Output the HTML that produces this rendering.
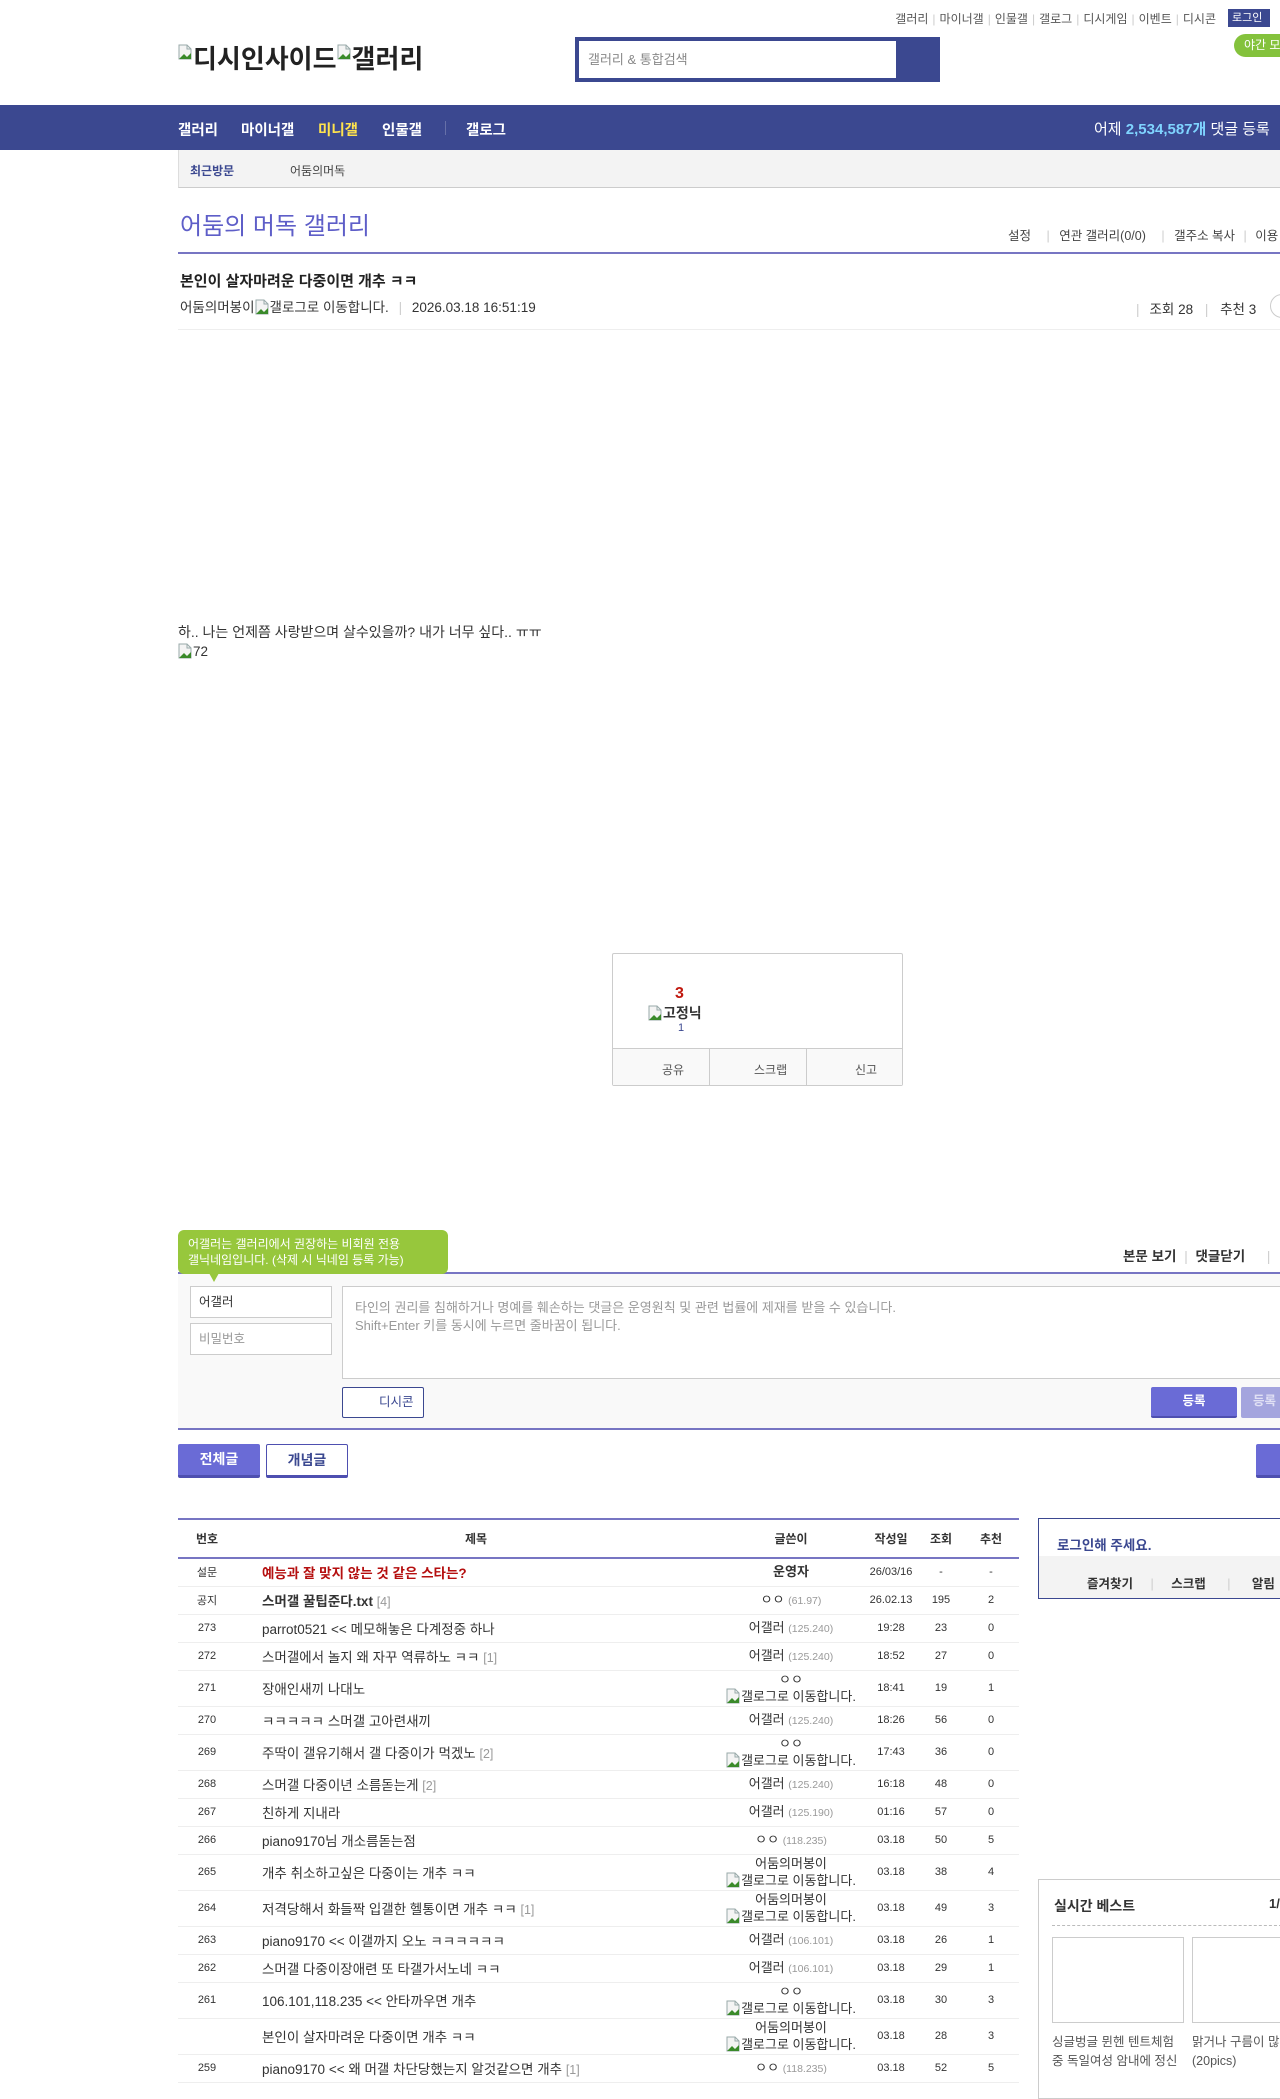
<!DOCTYPE html>
<html><head><meta charset="utf-8">
<style>
*{margin:0;padding:0;box-sizing:border-box}
body{width:1280px;height:2085px;overflow:hidden;background:#fff;font-family:"Liberation Sans","Noto Sans CJK KR",sans-serif;color:#333;font-size:13px;position:relative}
.a{position:absolute;white-space:nowrap}
.bi{display:inline-block;width:14px;height:16px;vertical-align:-3px;margin-right:1px}
.tl{font-size:12px;color:#555}
.tl span{color:#ccc;margin:0 4px}
table{border-collapse:collapse;table-layout:fixed}
td{height:28px;font-size:11px;text-align:center;border-bottom:1px solid #eee;color:#333}
td.t{text-align:left;font-size:13.5px;padding-left:26px}
td.w{font-size:13px;line-height:16px}
.ip{color:#999;font-size:10.5px}
.rc{color:#999;font-size:12.5px}
tr.d td{height:36px}
</style></head><body>
<svg width="0" height="0" style="position:absolute"><defs><symbol id="bi" viewBox="0 0 14 16"><path d="M1 1h8l4 4v10H1z" fill="#f4f4f4" stroke="#9aa"/><path d="M1 15l5-5 3 3 4-4v6z" fill="#3a8a2a"/><path d="M9 1v4h4" fill="none" stroke="#9aa"/></symbol></defs></svg>

<div class="a tl" style="right:64px;top:10px">갤러리<span>|</span>마이너갤<span>|</span>인물갤<span>|</span>갤로그<span>|</span>디시게임<span>|</span>이벤트<span>|</span>디시콘</div>
<div class="a" style="left:1228px;top:9px;width:42px;height:18px;background:#3b4890;color:#fff;font-size:11px;line-height:18px;padding-left:4px">로그인</div>
<div class="a" style="left:1234px;top:34px;width:60px;height:23px;background:#84c23c;border-radius:12px;color:#fff;font-size:12px;line-height:23px;padding-left:10px">야간 모드</div>

<div class="a" style="left:178px;top:39px;font-size:26px;font-weight:bold;color:#222"><svg class="bi" style="vertical-align:8px"><use href="#bi"/></svg>디시인사이드<svg class="bi" style="vertical-align:8px"><use href="#bi"/></svg>갤러리</div>
<div class="a" style="left:575px;top:37px;width:365px;height:45px;background:#3b4890"></div>
<div class="a" style="left:579px;top:41px;width:317px;height:37px;background:#fff;font-size:13px;color:#888;line-height:37px;padding-left:9px">갤러리 &amp; 통합검색</div>

<div class="a" style="left:0;top:105px;width:1280px;height:45px;background:#3b4890"></div>
<div class="a" style="left:178px;top:119px;font-size:14.5px;font-weight:bold;color:#fff">갤러리</div>
<div class="a" style="left:241px;top:119px;font-size:14.5px;font-weight:bold;color:#fff">마이너갤</div>
<div class="a" style="left:318px;top:119px;font-size:14.5px;font-weight:bold;color:#ffe34d">미니갤</div>
<div class="a" style="left:382px;top:119px;font-size:14.5px;font-weight:bold;color:#fff">인물갤</div>
<div class="a" style="left:445px;top:121px;width:1px;height:14px;background:#6670a8"></div>
<div class="a" style="left:466px;top:119px;font-size:14.5px;font-weight:bold;color:#fff">갤로그</div>
<div class="a" style="left:1094px;top:118px;font-size:15px;color:#fff">어제 <b style="color:#7fd4ff">2,534,587개</b> 댓글 등록</div>

<div class="a" style="left:178px;top:150px;width:1110px;height:38px;background:#f3f3f3;border-left:1px solid #ddd;border-bottom:1px solid #ccc"></div>
<div class="a" style="left:190px;top:162px;font-size:12px;color:#3b4890;font-weight:bold">최근방문</div>
<div class="a" style="left:290px;top:162px;font-size:12px;color:#444">어둠의머독</div>

<div class="a" style="left:180px;top:206px;font-size:24px;color:#5e5ec8">어둠의 머독 갤러리</div>
<div class="a" style="left:1008px;top:225px;font-size:12.5px;color:#444">설정 <span style="color:#ccc;margin:0 6px 0 12px">|</span> 연관 갤러리(0/0) <span style="color:#ccc;margin:0 6px 0 12px">|</span> 갤주소 복사 <span style="color:#ccc;margin:0 5px">|</span> 이용</div>
<div class="a" style="left:178px;top:252px;width:1110px;height:2px;background:#7775c3"></div>

<div class="a" style="left:180px;top:270px;font-size:15px;font-weight:bold;color:#222">본인이 살자마려운 다중이면 개추 ㅋㅋ</div>
<div class="a" style="left:180px;top:296px;font-size:13.5px;color:#333">어둠의머봉이<svg class="bi"><use href="#bi"/></svg>갤로그로 이동합니다. <span style="color:#ccc;margin:0 6px">|</span> 2026.03.18 16:51:19</div>
<div class="a" style="left:1136px;top:298px;font-size:13.5px;color:#333"><span style="color:#ccc;margin-right:10px">|</span>조회 28 <span style="color:#ccc;margin:0 8px">|</span> 추천 3</div>
<div class="a" style="left:1270px;top:294px;width:24px;height:24px;border:1px solid #ccc;border-radius:12px"></div>
<div class="a" style="left:178px;top:329px;width:1110px;height:1px;background:#eee"></div>

<div class="a" style="left:178px;top:622px;font-size:14px;color:#333">하.. 나는 언제쯤 사랑받으며 살수있을까? 내가 너무 싶다.. ㅠㅠ</div>
<div class="a" style="left:178px;top:643px;font-size:13.5px;color:#333"><svg class="bi"><use href="#bi"/></svg>72</div>

<div class="a" style="left:612px;top:953px;width:291px;height:133px;border:1px solid #ccc;border-radius:2px"></div>
<div class="a" style="left:675px;top:985px;font-size:16px;font-weight:bold;color:#c0180e">3</div>
<div class="a" style="left:648px;top:1003px;font-size:14px;font-weight:bold;color:#333"><svg class="bi"><use href="#bi"/></svg>고정닉</div>
<div class="a" style="left:678px;top:1022px;font-size:11px;color:#3b4890">1</div>
<div class="a" style="left:613px;top:1048px;width:289px;height:37px;background:#f9f9f9;border-top:1px solid #ccc"></div>
<div class="a" style="left:709px;top:1048px;width:1px;height:37px;background:#ccc"></div>
<div class="a" style="left:806px;top:1048px;width:1px;height:37px;background:#ccc"></div>
<div class="a" style="left:662px;top:1061px;font-size:12px;color:#555">공유</div>
<div class="a" style="left:754px;top:1061px;font-size:12px;color:#555">스크랩</div>
<div class="a" style="left:855px;top:1061px;font-size:12px;color:#555">신고</div>

<div class="a" style="left:430px;top:1244px;font-size:14px;font-weight:bold;color:#333">순</div>
<div class="a" style="left:1123px;top:1245px;font-size:13.5px;font-weight:bold;color:#333">본문 보기 <span style="color:#ccc;font-weight:normal;margin:0 4px">|</span> 댓글닫기 <span style="color:#ccc;font-weight:normal;margin:0 0 0 18px">|</span></div>
<div class="a" style="left:178px;top:1272px;width:1110px;height:158px;background:#f9f9f9;border-top:2px solid #7775c3;border-bottom:2px solid #7775c3"></div>
<div class="a" style="left:178px;top:1230px;width:270px;height:44px;background:#97c73c;border-radius:6px;color:#fff;font-size:12px;line-height:16px;padding:6px 10px">어갤러는 갤러리에서 권장하는 비회원 전용<br>갤닉네임입니다. (삭제 시 닉네임 등록 가능)</div>
<div class="a" style="left:209px;top:1273px;width:0;height:0;border-left:5px solid transparent;border-right:5px solid transparent;border-top:9px solid #97c73c"></div>
<div class="a" style="left:190px;top:1286px;width:142px;height:32px;background:#fff;border:1px solid #ccc;font-size:12.5px;color:#333;line-height:30px;padding-left:8px">어갤러</div>
<div class="a" style="left:190px;top:1323px;width:142px;height:32px;background:#fff;border:1px solid #ccc;font-size:12.5px;color:#999;line-height:30px;padding-left:8px">비밀번호</div>
<div class="a" style="left:342px;top:1286px;width:950px;height:93px;background:#fff;border:1px solid #ccc;font-size:13px;color:#999;line-height:18px;padding:12px 12px">타인의 권리를 침해하거나 명예를 훼손하는 댓글은 운영원칙 및 관련 법률에 제재를 받을 수 있습니다.<br>Shift+Enter 키를 동시에 누르면 줄바꿈이 됩니다.</div>
<div class="a" style="left:342px;top:1387px;width:82px;height:31px;background:#fff;border:1px solid #3b4890;border-radius:2px;font-size:12.5px;color:#3b4890;line-height:29px;padding-left:36px">디시콘</div>
<div class="a" style="left:1151px;top:1387px;width:86px;height:31px;background:#6a6bd6;border-bottom:2px solid #4e4fb0;border-radius:2px;font-size:12.5px;font-weight:bold;color:#fff;line-height:29px;text-align:center">등록</div>
<div class="a" style="left:1241px;top:1387px;width:86px;height:31px;background:#a4a5de;border-radius:2px;font-size:12.5px;font-weight:bold;color:#e0e0f4;line-height:29px;padding-left:12px">등록</div>

<div class="a" style="left:178px;top:1444px;width:82px;height:34px;background:#6a6bd6;border-bottom:3px solid #4e4fb0;border-radius:2px;font-size:14px;font-weight:bold;color:#fff;line-height:31px;text-align:center">전체글</div>
<div class="a" style="left:266px;top:1444px;width:82px;height:34px;background:#fff;border:1px solid #4e4fb0;border-bottom:3px solid #4e4fb0;border-radius:2px;font-size:14px;font-weight:bold;color:#3b4890;line-height:30px;text-align:center">개념글</div>
<div class="a" style="left:1256px;top:1444px;width:60px;height:34px;background:#6a6bd6;border-bottom:3px solid #4e4fb0;border-radius:2px"></div>

<div class="a" style="left:178px;top:1518px;width:841px">
<table style="width:841px;border-top:2px solid #7775c3">
<colgroup><col style="width:58px"><col style="width:480px"><col style="width:150px"><col style="width:50px"><col style="width:50px"><col style="width:50px"><col style="width:3px"></colgroup>
<tr style="font-weight:bold"><td style="height:39px;font-size:12px;font-weight:bold;border-bottom:2px solid #7775c3">번호</td><td style="font-size:12px;font-weight:bold;border-bottom:2px solid #7775c3">제목</td><td style="font-size:12px;font-weight:bold;border-bottom:2px solid #7775c3">글쓴이</td><td style="font-size:12px;font-weight:bold;border-bottom:2px solid #7775c3">작성일</td><td style="font-size:12px;font-weight:bold;border-bottom:2px solid #7775c3">조회</td><td style="font-size:12px;font-weight:bold;border-bottom:2px solid #7775c3">추천</td><td style="border-bottom:2px solid #7775c3"></td></tr>
<tr><td>설문</td><td class="t" style="color:#b50f0f;font-weight:bold">예능과 잘 맞지 않는 것 같은 스타는?</td><td class="w" style="font-weight:bold">운영자</td><td>26/03/16</td><td>-</td><td>-</td><td></td></tr>
<tr><td>공지</td><td class="t" style="font-weight:bold">스머갤 꿀팁준다.txt <span class="rc" style="font-weight:normal">[4]</span></td><td class="w">ㅇㅇ <span class="ip">(61.97)</span></td><td>26.02.13</td><td>195</td><td>2</td><td></td></tr>
<tr><td>273</td><td class="t">parrot0521 &lt;&lt; 메모해놓은 다계정중 하나</td><td class="w">어갤러 <span class="ip">(125.240)</span></td><td>19:28</td><td>23</td><td>0</td><td></td></tr>
<tr><td>272</td><td class="t">스머갤에서 놀지 왜 자꾸 역류하노 ㅋㅋ <span class="rc">[1]</span></td><td class="w">어갤러 <span class="ip">(125.240)</span></td><td>18:52</td><td>27</td><td>0</td><td></td></tr>
<tr class="d"><td>271</td><td class="t">장애인새끼 나대노</td><td class="w">ㅇㅇ<br><svg class="bi"><use href="#bi"/></svg>갤로그로 이동합니다.</td><td>18:41</td><td>19</td><td>1</td><td></td></tr>
<tr><td>270</td><td class="t">ㅋㅋㅋㅋㅋ 스머갤 고아련새끼</td><td class="w">어갤러 <span class="ip">(125.240)</span></td><td>18:26</td><td>56</td><td>0</td><td></td></tr>
<tr class="d"><td>269</td><td class="t">주딱이 갤유기해서 갤 다중이가 먹겠노 <span class="rc">[2]</span></td><td class="w">ㅇㅇ<br><svg class="bi"><use href="#bi"/></svg>갤로그로 이동합니다.</td><td>17:43</td><td>36</td><td>0</td><td></td></tr>
<tr><td>268</td><td class="t">스머갤 다중이년 소름돋는게 <span class="rc">[2]</span></td><td class="w">어갤러 <span class="ip">(125.240)</span></td><td>16:18</td><td>48</td><td>0</td><td></td></tr>
<tr><td>267</td><td class="t">친하게 지내라</td><td class="w">어갤러 <span class="ip">(125.190)</span></td><td>01:16</td><td>57</td><td>0</td><td></td></tr>
<tr><td>266</td><td class="t">piano9170님 개소름돋는점</td><td class="w">ㅇㅇ <span class="ip">(118.235)</span></td><td>03.18</td><td>50</td><td>5</td><td></td></tr>
<tr class="d"><td>265</td><td class="t">개추 취소하고싶은 다중이는 개추 ㅋㅋ</td><td class="w">어둠의머봉이<br><svg class="bi"><use href="#bi"/></svg>갤로그로 이동합니다.</td><td>03.18</td><td>38</td><td>4</td><td></td></tr>
<tr class="d"><td>264</td><td class="t">저격당해서 화들짝 입갤한 헬통이면 개추 ㅋㅋ <span class="rc">[1]</span></td><td class="w">어둠의머봉이<br><svg class="bi"><use href="#bi"/></svg>갤로그로 이동합니다.</td><td>03.18</td><td>49</td><td>3</td><td></td></tr>
<tr><td>263</td><td class="t">piano9170 &lt;&lt; 이갤까지 오노 ㅋㅋㅋㅋㅋㅋ</td><td class="w">어갤러 <span class="ip">(106.101)</span></td><td>03.18</td><td>26</td><td>1</td><td></td></tr>
<tr><td>262</td><td class="t">스머갤 다중이장애련 또 타갤가서노네 ㅋㅋ</td><td class="w">어갤러 <span class="ip">(106.101)</span></td><td>03.18</td><td>29</td><td>1</td><td></td></tr>
<tr class="d"><td>261</td><td class="t">106.101,118.235 &lt;&lt; 안타까우면 개추</td><td class="w">ㅇㅇ<br><svg class="bi"><use href="#bi"/></svg>갤로그로 이동합니다.</td><td>03.18</td><td>30</td><td>3</td><td></td></tr>
<tr class="d"><td></td><td class="t">본인이 살자마려운 다중이면 개추 ㅋㅋ</td><td class="w">어둠의머봉이<br><svg class="bi"><use href="#bi"/></svg>갤로그로 이동합니다.</td><td>03.18</td><td>28</td><td>3</td><td></td></tr>
<tr><td>259</td><td class="t">piano9170 &lt;&lt; 왜 머갤 차단당했는지 알것같으면 개추 <span class="rc">[1]</span></td><td class="w">ㅇㅇ <span class="ip">(118.235)</span></td><td>03.18</td><td>52</td><td>5</td><td></td></tr>
</table></div>

<div class="a" style="left:1038px;top:1518px;width:260px;height:81px;border:1px solid #3b4890"></div>
<div class="a" style="left:1057px;top:1534px;font-size:13.5px;font-weight:bold;color:#3b4890">로그인해 주세요.</div>
<div class="a" style="left:1039px;top:1556px;width:250px;height:42px;background:#f3f3f3"></div>
<div class="a" style="left:1087px;top:1573px;font-size:12.5px;font-weight:bold;color:#333">즐겨찾기 <span style="color:#ccc;font-weight:normal;margin:0 14px">|</span> 스크랩 <span style="color:#ccc;font-weight:normal;margin:0 18px">|</span> 알림</div>

<div class="a" style="left:1038px;top:1879px;width:260px;height:220px;border:1px solid #ccc"></div>
<div class="a" style="left:1054px;top:1896px;font-size:14px;font-weight:bold;color:#333">실시간 베스트</div>
<div class="a" style="left:1269px;top:1896px;font-size:13px;font-weight:bold;color:#333">1/</div>
<div class="a" style="left:1052px;top:1925px;width:230px;border-top:1px dashed #bbb"></div>
<div class="a" style="left:1052px;top:1937px;width:132px;height:86px;border:1px solid #ccc"></div>
<div class="a" style="left:1192px;top:1937px;width:100px;height:86px;border:1px solid #ccc"></div>
<div class="a" style="left:1052px;top:2033px;font-size:12.5px;line-height:19px;color:#555">싱글벙글 뮌헨 텐트체험<br>중 독일여성 암내에 정신</div>
<div class="a" style="left:1192px;top:2033px;font-size:12.5px;line-height:19px;color:#555">맑거나 구름이 많<br>(20pics)</div>
</body></html>
